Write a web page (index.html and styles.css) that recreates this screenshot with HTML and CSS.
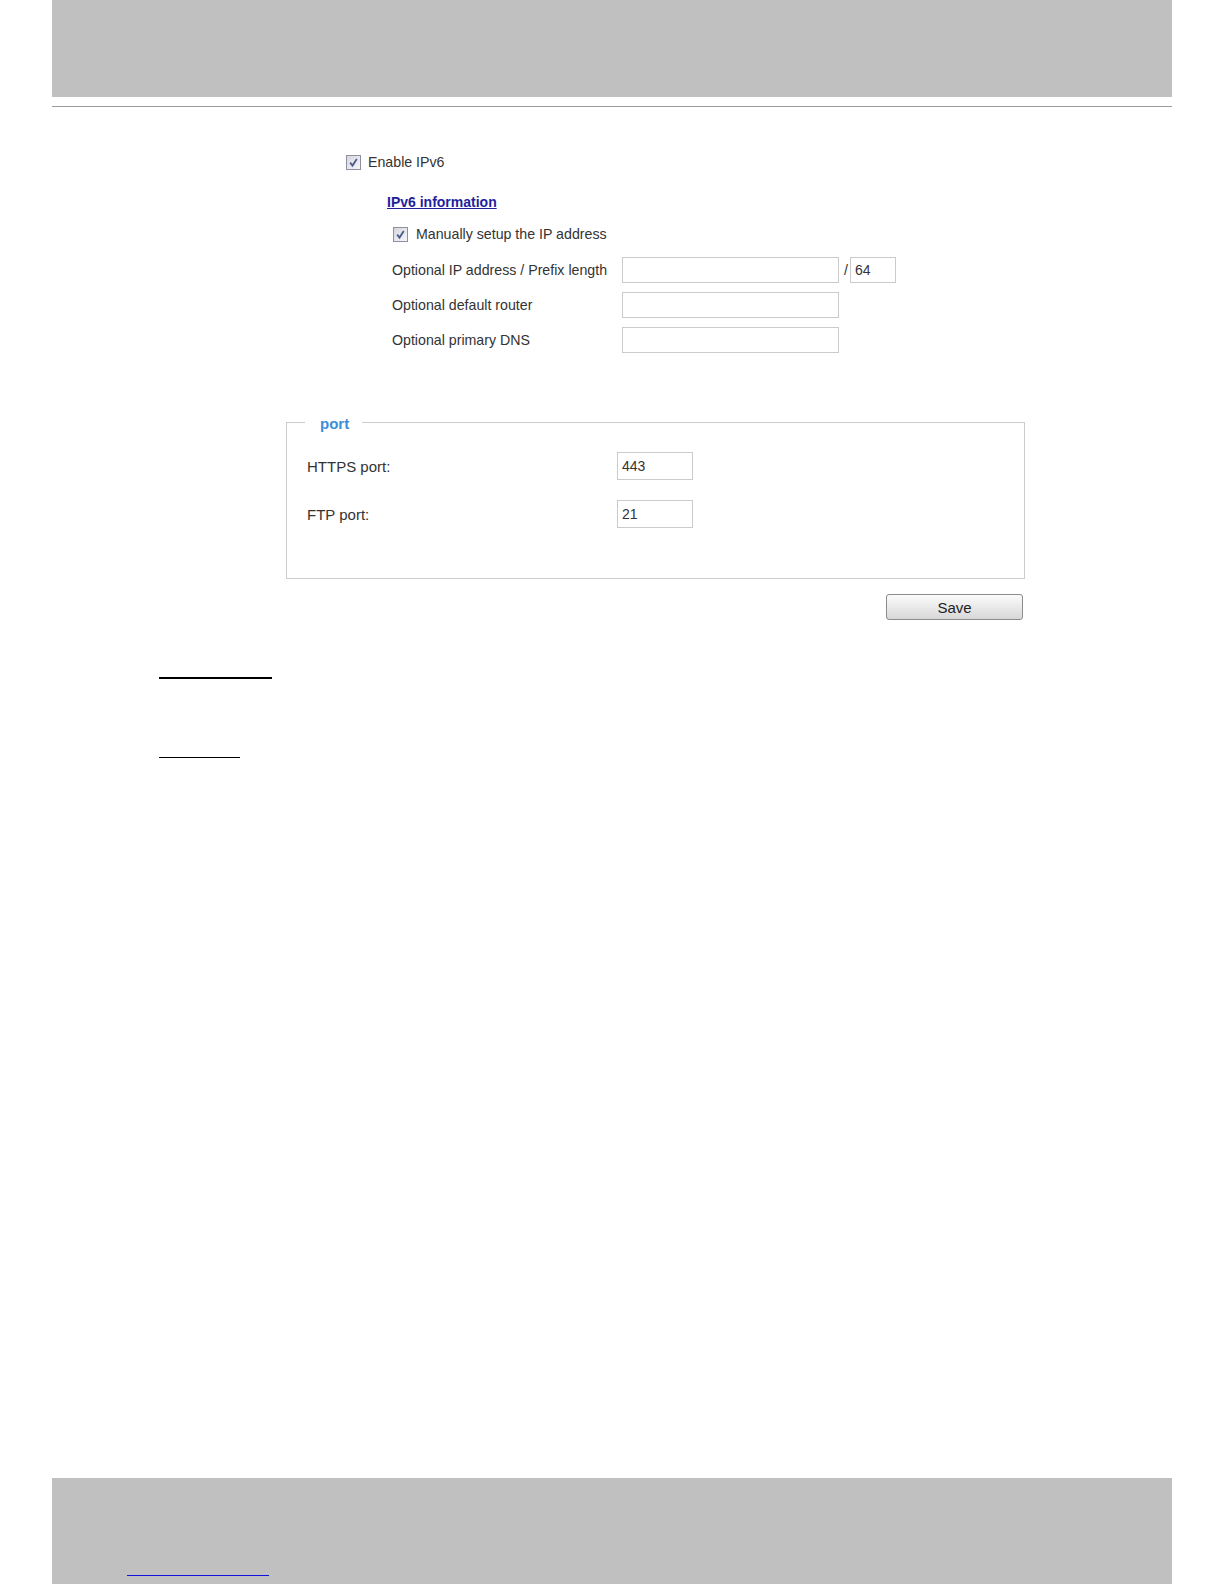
FILE: index.html
```html
<!DOCTYPE html>
<html lang="en">
<head>
    <meta charset="UTF-8">
    <meta name="viewport" content="width=device-width, initial-scale=1.0">
    <title>Network - IPv6</title>
    <link rel="stylesheet" href="styles.css">
</head>
<body>
    <div class="page">
        <header class="top-band"></header>
        <div class="top-rule"></div>

        <main class="content">
            <section class="ipv6">
                <label class="check-row">
                    <span class="checkbox">
                        <svg width="13" height="13" viewBox="0 0 13 13"><path d="M3.2 6.6 L5.5 9.6 L9.8 3" fill="none" stroke="#4a5d8c" stroke-width="1.8"/></svg>
                    </span>
                    Enable IPv6
                </label>

                <div class="ipv6-info">
                    <a href="#" class="info-link">IPv6 information</a>

                    <label class="check-row manual">
                        <span class="checkbox">
                            <svg width="13" height="13" viewBox="0 0 13 13"><path d="M3.2 6.6 L5.5 9.6 L9.8 3" fill="none" stroke="#4a5d8c" stroke-width="1.8"/></svg>
                        </span>
                        Manually setup the IP address
                    </label>

                    <div class="addr-grid">
                        <span>Optional IP address / Prefix length</span>
                        <div class="addr-field">
                            <input class="text-box wide" type="text">
                            <span class="slash">/</span>
                            <input class="text-box prefix" type="text" value="64">
                        </div>
                        <span>Optional default router</span>
                        <div class="addr-field">
                            <input class="text-box wide" type="text">
                        </div>
                        <span>Optional primary DNS</span>
                        <div class="addr-field">
                            <input class="text-box wide" type="text">
                        </div>
                    </div>
                </div>
            </section>

            <fieldset class="port-box">
                <legend>port</legend>
                <div class="port-grid">
                    <span>HTTPS port:</span>
                    <input class="text-box port-input" type="text" value="443">
                    <span>FTP port:</span>
                    <input class="text-box port-input" type="text" value="21">
                </div>
            </fieldset>

            <div class="actions">
                <button class="save-btn" type="button">Save</button>
            </div>

            <div class="notes">
                <span class="note-line long"></span>
                <span class="note-line short"></span>
            </div>
        </main>

        <footer class="bottom-band">
            <span class="footer-link"></span>
        </footer>
    </div>
</body>
</html>
```

FILE: styles.css
```css
/* Page frame */
body {
    margin: 0;
    padding: 0;
    font-family: "Liberation Sans", Arial, sans-serif;
    font-size: 14px;
    color: #333;
    background-color: #fff;
}

.page {
    display: flex;
    flex-direction: column;
    min-height: 1584px;
}

.top-band {
    margin: 0 52px;
    height: 97px;
    background-color: #c0c0c0;
}

.top-rule {
    margin: 9px 52px 0;
    height: 1px;
    background-color: #9b9b9b;
}

/* IPv6 block */
.ipv6 {
    padding-top: 45px;
    padding-left: 346px;
    font-size: 14.2px;
}

.check-row {
    display: flex;
    align-items: center;
    gap: 7px;
    height: 20px;
}

.checkbox {
    display: flex;
    align-items: center;
    justify-content: center;
    width: 15px;
    height: 15px;
    box-sizing: border-box;
    border: 1px solid #8e8f9f;
    background-image: linear-gradient(to bottom right, #d6d7df, #f7f7f9);
}

.ipv6-info {
    margin-left: 41px;
    padding-top: 20px;
}

.info-link {
    display: inline-block;
    line-height: 20px;
    font-size: 14px;
    font-weight: bold;
    color: #1f1f9c;
    text-decoration: underline;
}

.manual {
    margin-top: 12px;
    margin-left: 6px;
    gap: 8px;
}

.addr-grid {
    display: grid;
    grid-template-columns: 230px auto;
    row-gap: 9px;
    align-items: center;
    margin-top: 13px;
    margin-left: 5px;
}

.addr-field {
    display: flex;
    align-items: center;
}

.text-box {
    height: 26px;
    box-sizing: border-box;
    padding: 0 4px;
    border: 1px solid #cbcbcb;
    background-color: #fff;
    font-family: "Liberation Sans", Arial, sans-serif;
    font-size: 14px;
    color: #333;
    outline: none;
}

.wide {
    width: 217px;
}

.prefix {
    width: 46px;
}

.slash {
    margin: 0 2px 0 5px;
}

/* Port fieldset */
.port-box {
    margin: 57px 0 0 286px;
    width: 739px;
    box-sizing: border-box;
    padding: 18px 0 50px 18px;
    border: 1px solid #cccccc;
}

.port-box legend {
    padding: 4px 13px 0 15px;
    font-size: 15px;
    font-weight: bold;
    line-height: 20px;
    color: #3b8ed8;
}

.port-grid {
    display: grid;
    grid-template-columns: 310px 76px;
    row-gap: 20px;
    align-items: center;
    padding-left: 2px;
    font-size: 15px;
}

.port-input {
    width: 76px;
    height: 28px;
}

/* Save */
.actions {
    margin: 15px 0 0 886px;
}

.save-btn {
    display: block;
    width: 137px;
    height: 26px;
    padding: 0;
    border: 1px solid #8c8c8c;
    border-radius: 3px;
    background-image: linear-gradient(to bottom, #fbfbfb, #d8d8d8);
    font-family: "Liberation Sans", Arial, sans-serif;
    font-size: 15px;
    color: #222;
}

/* Underlined headings below */
.notes {
    display: flex;
    flex-direction: column;
    margin-top: 57px;
    padding-left: 159px;
}

.note-line {
    display: block;
    border-top: 2px solid #000;
}

.note-line.long {
    width: 113px;
}

.note-line.short {
    width: 81px;
    margin-top: 78px;
    border-top-width: 1px;
}

/* Footer */
.bottom-band {
    display: flex;
    align-items: flex-end;
    margin: auto 52px 0;
    height: 106px;
    box-sizing: border-box;
    padding: 0 0 8px 75px;
    background-color: #c0c0c0;
}

.footer-link {
    display: block;
    width: 142px;
    border-top: 1px solid #1212e0;
}
```
